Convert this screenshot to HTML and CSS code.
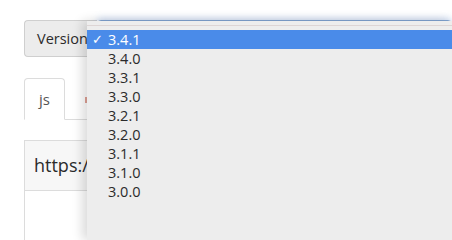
FILE: index.html
```html
<!DOCTYPE html>
<html>
<head>
<meta charset="utf-8">
<link rel="stylesheet" href="styles.css">
</head>
<body>
<div class="page">
  <div class="input-group">
    <span class="addon">Version</span>
    <div class="select"></div>
  </div>
  <div class="tabs">
    <div class="tab active">js</div>
    <div class="tab"><span class="tab-mark"></span></div>
  </div>
  <div class="url-group">
    <div class="url-prefix">https://</div>
  </div>
  <div class="below"></div>
</div>
<ul class="dropdown">
  <li class="item selected"><span class="check">✓</span>3.4.1</li>
  <li class="item">3.4.0</li>
  <li class="item">3.3.1</li>
  <li class="item">3.3.0</li>
  <li class="item">3.2.1</li>
  <li class="item">3.2.0</li>
  <li class="item">3.1.1</li>
  <li class="item">3.1.0</li>
  <li class="item">3.0.0</li>
</ul>
</body>
</html>
```
FILE: styles.css
```css
html, body {
  margin: 0;
  padding: 0;
  background: #ffffff;
  overflow: hidden;
  height: 100%;
}
body {
  position: relative;
  font-family: "Open Sans", "Noto Sans", "DejaVu Sans", sans-serif;
  color: #2b2b2b;
}
.page {
  box-sizing: border-box;
  height: 100%;
  display: flex;
  flex-direction: column;
  padding: 20px 0 0 24px;
}
.input-group {
  display: flex;
  flex: none;
  height: 37px;
}
.addon {
  box-sizing: border-box;
  width: 73px;
  padding-left: 12px;
  background: #ececec;
  border: 1px solid #cfcfcf;
  border-right: none;
  border-radius: 4px 0 0 4px;
  font-size: 14.5px;
  line-height: 35px;
  color: #2b2b2b;
  white-space: nowrap;
}
.select {
  flex: 1;
  background: #fff;
  border: 1px solid #7fa2cf;
  border-radius: 4px;
  box-shadow: 0 -2px 7px rgba(110, 150, 215, 0.35);
}
.tabs {
  display: flex;
  flex: none;
  margin-top: 21px;
  border-bottom: 1px solid #dcdcdc;
  height: 41px;
}
.tab {
  box-sizing: border-box;
  height: 42px;
  font-size: 15px;
  line-height: 40px;
  color: #555;
}
.tab.active {
  width: 41px;
  text-align: center;
  border: 1px solid #dcdcdc;
  border-bottom-color: #fff;
  border-radius: 4px 4px 0 0;
  background: #fff;
}
.tab-mark {
  display: block;
  margin: 19px 0 0 20px;
  width: 3px;
  height: 6px;
  background: #e0a296;
}
.url-group {
  box-sizing: border-box;
  flex: none;
  margin-top: 20px;
  height: 51px;
  background: #f7f7f7;
  border: 1px solid #dcdcdc;
}
.url-prefix {
  padding-left: 9px;
  font-size: 18px;
  line-height: 49px;
  color: #2b2b2b;
}
.below {
  flex: 1;
  border-left: 1px solid #dcdcdc;
}
.dropdown {
  box-sizing: border-box;
  position: absolute;
  left: 87px;
  top: 21px;
  right: 0;
  bottom: 0;
  margin: 0;
  padding: 9px 0 0 0;
  list-style: none;
  overflow: hidden;
  background: #ededed;
  box-shadow: -5px 0 10px rgba(0, 0, 0, 0.14);
}
.dropdown::before {
  content: "";
  position: absolute;
  left: 0;
  right: 0;
  top: 4px;
  height: 1px;
  background: #ddd5d5;
}
.item {
  position: relative;
  height: 19px;
  padding-left: 21px;
  font-size: 14.5px;
  line-height: 19px;
  color: #2b2b2b;
}
.item.selected {
  background: #4a8be9;
  color: #fff;
}
.check {
  position: absolute;
  left: 5px;
  top: 0;
  font-size: 13px;
}
```
